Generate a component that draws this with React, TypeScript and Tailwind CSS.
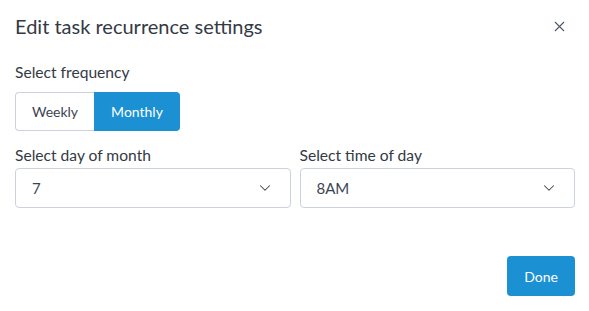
import { X, ChevronDown } from 'lucide-react'

function SelectBox({ value }: { value: string }) {
  return (
    <div className="flex h-10 items-center justify-between rounded border border-[#cdd3dc] bg-white pl-[16px] pr-[16px] text-[15px] text-[#3c4452]">
      <span>{value}</span>
      <ChevronDown className="h-[18px] w-[18px] text-[#3c4452]" strokeWidth={1.4} />
    </div>
  )
}

export default function App() {
  return (
    <div className="h-[311px] w-[589px] bg-white font-['Lato','Liberation_Sans',sans-serif] text-[#333a45]">
      <div className="flex items-center justify-between pl-[15px] pr-[21px] pt-[13px]">
        <h2 className="text-[20px] leading-[26px] text-[#333a45]">Edit task recurrence settings</h2>
        <X className="h-[17px] w-[17px] text-[#4d5666]" strokeWidth={1.5} />
      </div>

      <div className="pl-[15px] pr-[14px] pt-[23px]">
        <div className="text-[15.6px] leading-[20px]">Select frequency</div>
        <div className="mt-[10px] flex w-fit">
          <button className="h-[39px] w-[79px] rounded-l border border-r-0 border-[#cdd3dc] bg-white text-[14px] text-[#3c4452]">
            Weekly
          </button>
          <button className="h-[39px] w-[86px] rounded-r bg-[#1b91d3] text-[14px] text-white">
            Monthly
          </button>
        </div>

        <div className="mt-[14px] grid grid-cols-2 gap-[9px]">
          <div>
            <div className="mb-[3px] text-[15.6px] leading-[20px]">Select day of month</div>
            <SelectBox value="7" />
          </div>
          <div>
            <div className="mb-[3px] text-[15.6px] leading-[20px]">Select time of day</div>
            <SelectBox value="8AM" />
          </div>
        </div>

        <div className="mt-[48px] flex justify-end">
          <button className="h-10 w-[68px] rounded bg-[#1b91d3] text-[14px] text-white">Done</button>
        </div>
      </div>
    </div>
  )
}
